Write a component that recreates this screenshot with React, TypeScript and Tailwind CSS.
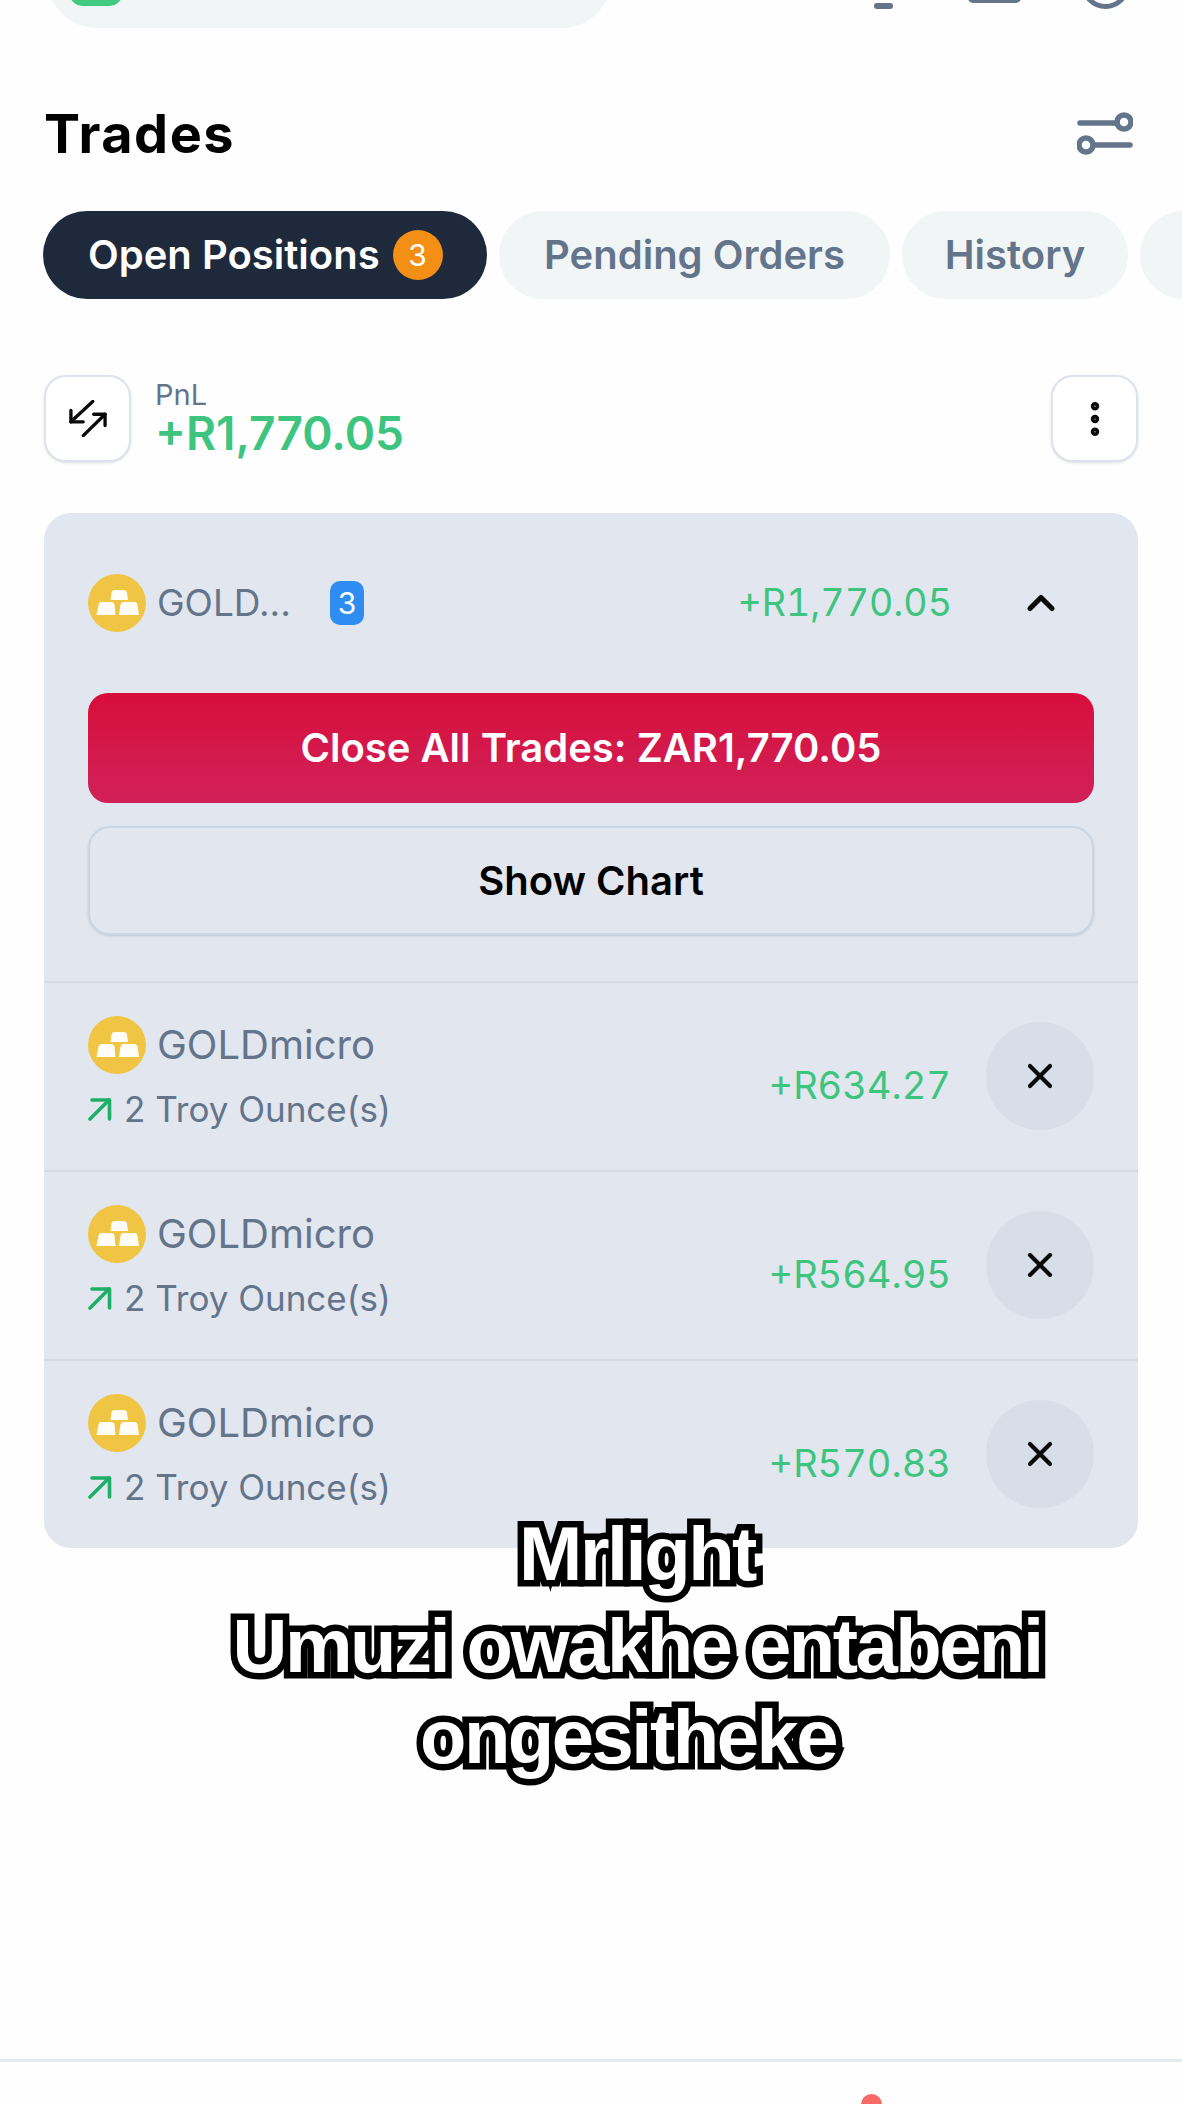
import React from "react";
import { X, ChevronUp, EllipsisVertical } from "lucide-react";

const FONT = "font-['Inter','Liberation_Sans',sans-serif]";

function GoldIcon() {
  return (
    <svg viewBox="0 0 58 58" className="w-[58px] h-[58px] shrink-0">
      <circle cx="29" cy="29" r="29" fill="#f0c544" />
      <path d="M23.500 18.500a3 3 0 0 1 3-2.500h9.500a3 3 0 0 1 3 2.500l1 7.500h-17.500z" fill="#fffdf5" />
      <path d="M10.500 30.500a3 3 0 0 1 3-2.500h10a3 3 0 0 1 3 2.500l1 10.500h-19z" fill="#fffdf5" />
      <path d="M32.500 30.500a3 3 0 0 1 3-2.500h11a3 3 0 0 1 3 2.500l1.500 10.500h-20z" fill="#fffdf5" />
    </svg>
  );
}

function FilterIcon() {
  return (
    <svg viewBox="0 0 56 44" className="w-[56px] h-[44px]" fill="none" stroke="#64748b" strokeWidth="5.500" strokeLinecap="round">
      <path d="M3 11h37" />
      <circle cx="47" cy="10" r="7" />
      <path d="M18 33h35" />
      <circle cx="9" cy="33" r="7" />
    </svg>
  );
}

function SwapIcon() {
  return (
    <svg viewBox="0 0 40 39" className="w-[38px] h-[37px]" fill="none" stroke="#0a0a0a" strokeWidth="3.500" strokeLinecap="round" strokeLinejoin="round">
      <path d="M25 1.500 2 23" />
      <path d="M2 11v12h13" />
      <path d="M15 37.500 38 15" />
      <path d="M26 15h12v12" />
    </svg>
  );
}

function UpRightArrow() {
  return (
    <svg viewBox="0 0 24 24" className="w-[24px] h-[24px] shrink-0" fill="none" stroke="#1fae68" strokeWidth="3.600" strokeLinecap="round" strokeLinejoin="round">
      <path d="M2 22 21 3" />
      <path d="M4 3h17.500v19" />
    </svg>
  );
}

const positions = [
  { id: 1, pnl: "+R634.27" },
  { id: 2, pnl: "+R564.95" },
  { id: 3, pnl: "+R570.83" },
];

export default function App() {
  return (
    <div className={`relative w-[1182px] h-[2104px] overflow-hidden bg-[#fefefe] ${FONT}`}>
      {/* --- cut off top bar --- */}
      <div className="flex items-end h-[28px] overflow-hidden pl-[47px] pr-[52px]">
        <div className="w-[565px] h-[120px] shrink-0 rounded-b-[50px] bg-[#f1f5f6] pl-[22px]">
          <div className="w-[54px] h-[98px] rounded-b-[14px] bg-[#43c980]" />
        </div>
        <div className="ml-auto flex items-end h-[60px]">
          <div className="w-[19px] h-[6px] mb-[19px] rounded-[3px] bg-[#64748b]" />
          <div className="ml-[75px] w-[53px] h-[10px] mb-[25px] rounded-b-[5px] bg-[#64748b]" />
          <div className="ml-[60px] w-[49px] h-[49px] mb-[19px] rounded-full border-[5px] border-[#64748b]" />
        </div>
      </div>

      {/* --- title --- */}
      <div className="mt-[84px] h-[44px] flex items-center justify-between pl-[44px] pr-[49px]">
        <h1 className="text-[54px] leading-none font-bold text-black tracking-[1.500px]">Trades</h1>
        <FilterIcon />
      </div>

      {/* --- tabs --- */}
      <div className="mt-[55px] flex gap-[12px] pl-[43px] overflow-hidden">
        <div className="w-[444px] h-[88px] shrink-0 rounded-[44px] bg-[#1e293b] flex items-center pl-[45px] gap-[13px]">
          <span className="text-[40px] font-semibold text-white whitespace-nowrap">Open Positions</span>
          <span className="w-[50px] h-[50px] rounded-full bg-[#f38f14] text-white text-[30px] flex items-center justify-center">3</span>
        </div>
        <div className="w-[391px] h-[88px] shrink-0 rounded-[44px] bg-[#f1f5f6] flex items-center justify-center text-[40px] font-semibold text-[#64748b] whitespace-nowrap">Pending Orders</div>
        <div className="w-[226px] h-[88px] shrink-0 rounded-[44px] bg-[#f1f5f6] flex items-center justify-center text-[40px] font-semibold text-[#64748b]">History</div>
        <div className="w-[100px] h-[88px] shrink-0 rounded-[44px] bg-[#f1f5f6]" />
      </div>

      {/* --- total pnl --- */}
      <div className="mt-[76px] h-[87px] flex items-center justify-between pl-[44px] pr-[44px]">
        <div className="flex items-center">
          <div className="w-[87px] h-[87px] rounded-[22px] border-2 border-[#dde3ee] bg-white shadow-sm flex items-center justify-center">
            <SwapIcon />
          </div>
          <div className="ml-[24px] pb-[2px] flex flex-col">
            <span className="text-[29px] leading-[30px] text-[#64748b]">PnL</span>
            <span className="text-[46px] leading-[46px] font-semibold text-[#3dc47e]">+R1,770.05</span>
          </div>
        </div>
        <div className="w-[87px] h-[87px] rounded-[22px] border-2 border-[#dde3ee] bg-white shadow-sm flex items-center justify-center">
          <EllipsisVertical size={44} strokeWidth={2.600} color="#0a0a0a" />
        </div>
      </div>

      {/* --- gold card --- */}
      <div className="mt-[51px] mx-[44px] rounded-[27px] bg-[#e1e6ef] overflow-hidden">
        <div className="h-[180px] flex items-center pl-[44px] pr-[88px]">
          <GoldIcon />
          <span className="ml-[11px] w-[173px] text-[37px] text-[#64748b]">GOLD...</span>
          <span className="w-[34px] h-[44px] rounded-[10px] bg-[#2f8cf0] text-white text-[30px] flex items-center justify-center">3</span>
          <span className="ml-auto text-[37.500px] text-[#3dc47e] tabular-nums">+R1,770.05</span>
          <ChevronUp size={44} strokeWidth={2.800} color="#0a0a0a" className="ml-[67px] mr-[-13px]" />
        </div>

        <div className="px-[44px] flex flex-col gap-[23px] pb-[46px]">
          <button className="h-[110px] rounded-[20px] bg-gradient-to-b from-[#d70c3a] to-[#d12059] text-white text-[40px] font-semibold">
            Close All Trades: ZAR1,770.05
          </button>
          <button className="h-[109px] rounded-[22px] border-2 border-[#c9d5e3] shadow-sm text-black text-[40px] font-semibold">
            Show Chart
          </button>
        </div>

        {positions.map((p) => (
          <div key={p.id} className="h-[189px] border-t-2 border-[#d5dbe6] flex pl-[44px] pr-[44px]">
            <div className="pt-[33px] flex-1">
              <div className="flex items-center">
                <GoldIcon />
                <span className="ml-[11px] text-[40px] leading-none text-[#64748b]">GOLDmicro</span>
              </div>
              <div className="mt-[15px] flex items-center">
                <UpRightArrow />
                <span className="ml-[12px] text-[35px] leading-[40px] text-[#64748b] whitespace-nowrap">2 Troy Ounce(s)</span>
              </div>
            </div>
            <span className="mt-[82px] h-[40px] text-[38px] leading-[40px] text-[#3dc47e] tabular-nums">{p.pnl}</span>
            <div className="ml-[35px] mt-[39px] w-[108px] h-[108px] rounded-full bg-[#d8dee8] flex items-center justify-center">
              <X size={40} strokeWidth={2.500} color="#0a0a0a" />
            </div>
          </div>
        ))}
      </div>

      {/* --- video caption over the screen --- */}
      <div className="absolute left-[89px] top-[1508px] w-[1096px] text-center font-['Liberation_Sans',sans-serif] font-bold text-[76px] leading-[91.500px] text-white tracking-[-2.500px] [-webkit-text-stroke:13px_#000] [paint-order:stroke_fill]">
        <p>Mrlight</p>
        <p>Umuzi owakhe entabeni</p>
        <p className="pr-[18px]">ongesitheke</p>
      </div>

      {/* --- bottom nav, cut off --- */}
      <div className="absolute left-0 right-0 top-[2059px] h-[45px] border-t-[3px] border-[#e6ebef] pl-[861px] pt-[32px] overflow-hidden">
        <div className="w-[21px] h-[40px] rounded-full bg-[#f96a66]" />
      </div>
    </div>
  );
}
